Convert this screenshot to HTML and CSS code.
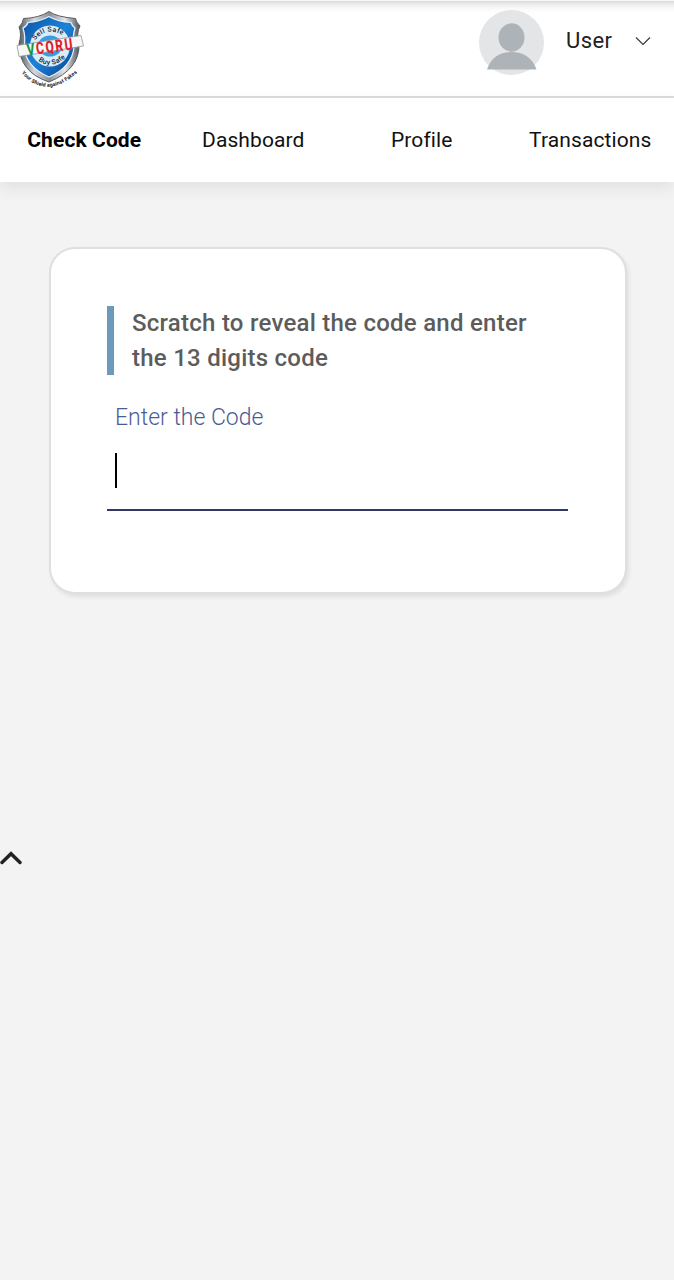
FILE: index.html
```html
<!DOCTYPE html>
<html lang="en">
<head>
<meta charset="utf-8">
<meta name="viewport" content="width=device-width, initial-scale=1">
<title>VCQRU - Check Code</title>
<link rel="stylesheet" href="styles.css">
</head>
<body>
<header class="topbar">
  <svg class="logo" viewBox="0 0 100 100" role="img" aria-label="VCQRU">
    <defs>
      <linearGradient id="steel" x1="0" y1="0" x2="1" y2="0">
        <stop offset="0" stop-color="#555b63"/><stop offset=".25" stop-color="#d5d8dc"/><stop offset=".5" stop-color="#8b9096"/><stop offset=".75" stop-color="#e5e7e9"/><stop offset="1" stop-color="#4b5057"/>
      </linearGradient>
      <linearGradient id="blue" x1="0" y1="0" x2="1" y2="1">
        <stop offset="0" stop-color="#0a55a5"/><stop offset=".5" stop-color="#1c83d8"/><stop offset="1" stop-color="#063f92"/>
      </linearGradient>
      <path id="arc-top" d="M35 40.500Q47 25.500 64 36"/>
      <path id="arc-bottom" d="M37.500 60Q51 71 67 56.500"/>
      <path id="arc-tag" d="M21.500 73Q46 101 78 72"/>
    </defs>
    <path d="M49 11.500Q57 17 75.500 18.500Q76 22 80 26Q76 33 79 44Q80 69 49 82Q19 72 19 44Q22 34 19 27Q23 23 23.500 18.500Q39 18 49 11.500Z" fill="url(#steel)" stroke="#555b62" stroke-width="1"/>
    <path d="M49 16.500Q58 22 71 22.500Q72 26 75 28Q72 38 74 47Q72 67 49 77Q26 67 24 47Q26 37 23 28Q27 26 28 22.500Q39 22 49 16.500Z" fill="url(#blue)" stroke="#e7f3fb" stroke-width="1.200"/>
    <ellipse cx="50" cy="46" rx="20" ry="20.500" fill="#d9edf8"/>
    <ellipse cx="50" cy="46" rx="12" ry="10.500" fill="#3d9ae0"/>
    <text class="logo-ring"><textPath href="#arc-top" textLength="31">Sell Safe</textPath></text>
    <text class="logo-ring"><textPath href="#arc-bottom" startOffset="1" textLength="30">Buy Safe</textPath></text>
    <path d="M17 45.500L81 35.500L83.500 46L19 56.500Z" fill="#f7f7f7" stroke="#92979c" stroke-width=".8"/>
    <text class="logo-name" transform="translate(27.500 55.500) rotate(-7.500) scale(.73 1)" textLength="63"><tspan fill="#149447">V</tspan><tspan fill="#df202b">CQRU</tspan></text>
    <text class="logo-tag"><textPath href="#arc-tag" textLength="64">Your Shield against Fakes</textPath></text>
  </svg>
  <div class="account">
    <svg class="avatar" viewBox="0 0 65 65" aria-hidden="true">
      <circle cx="32.500" cy="32.500" r="32.500" fill="#e3e5e7"/>
      <ellipse cx="32.500" cy="27.500" rx="13" ry="14.200" fill="#adb3b7"/>
      <path d="M8 59.500C12 47.500 21 42 32.500 42S53.500 47.500 57.500 59.500Z" fill="#adb3b7"/>
    </svg>
    <span class="user-name">User</span>
    <svg class="chevron" viewBox="0 0 16 10" aria-hidden="true"><path d="M1 1.500L8 8.500L15 1.500"/></svg>
  </div>
</header>
<nav class="tabs">
  <a class="tab tab-active">Check Code</a>
  <a class="tab">Dashboard</a>
  <a class="tab">Profile</a>
  <a class="tab">Transactions</a>
</nav>
<main class="content">
  <section class="card">
    <h1 class="card-title">Scratch to reveal the code and enter the 13 digits code</h1>
    <div class="field">
      <div class="field-label">Enter the Code</div>
      <div class="caret"></div>
    </div>
  </section>
  <svg class="to-top" viewBox="0 0 22 14" aria-hidden="true"><path d="M2 11.500L11 2.700L20 11.500"/></svg>
</main>
</body>
</html>
```
FILE: styles.css
```css
* { box-sizing: border-box; }
body {
  margin: 0;
  min-height: 1280px;
  background: #f3f3f3;
  font-family: Roboto, "Liberation Sans", sans-serif;
  color: #111;
}
.topbar {
  height: 98px;
  display: flex;
  justify-content: space-between;
  align-items: flex-start;
  background: linear-gradient(#f8f8f8 0, #f8f8f8 1px, #d9d9d9 1px, #ececec 4px, #fafafa 9px, #fff 13px);
  border-bottom: 2px solid #dcdcdc;
}
.logo { width: 100px; height: 100px; margin-bottom: -4px; overflow: visible; flex: none; }
.logo-ring { font: 500 7px Roboto, sans-serif; fill: #17242e; }
.logo-name { font: 800 16.500px Roboto, sans-serif; }
.logo-tag { font: 700 5.200px Roboto, sans-serif; fill: #111; }
.account { display: flex; align-items: center; padding: 9.500px 23px 0 0; }
.avatar { width: 65px; height: 65px; }
.user-name {
  width: 47px;
  margin: -2px 22px 0;
  font-size: 22px;
  line-height: 26px;
  letter-spacing: .4px;
  color: #222;
  white-space: nowrap;
}
.chevron { width: 16px; height: 10px; margin-top: -2px; }
.chevron path { fill: none; stroke: #333; stroke-width: 1.100; }
.tabs {
  position: relative;
  height: 84px;
  display: grid;
  grid-template-columns: repeat(4, 1fr);
  align-items: center;
  background: #fff;
  box-shadow: 0 6px 16px rgba(0, 0, 0, .08);
}
.tab { padding-left: 1px; font-size: 21px; line-height: 26px; text-align: center; letter-spacing: .1px; }
.tab-active { padding-left: 0; font-weight: 700; color: #000; }
.content { padding: 65px 47px 0 49px; }
.card {
  height: 347px;
  padding: 57px 57px 0 56px;
  background: #fff;
  border: 2px solid #dfdfdf;
  border-radius: 26px;
  box-shadow: 2px 3px 4px rgba(0, 0, 0, .08);
}
.card-title {
  margin: 0;
  height: 69px;
  padding: 0 30px 0 18px;
  border-left: 7px solid #6c9aba;
  font-size: 24px;
  line-height: 34.500px;
  letter-spacing: .25px;
  font-weight: 500;
  color: #5c5c5c;
}
.field {
  height: 136px;
  padding: 29px 8px 0;
  border-bottom: 2px solid #303866;
}
.field-label { font-size: 23px; line-height: 28px; font-weight: 300; color: #4b5c94; }
.caret { width: 2px; height: 35px; margin-top: 21px; background: #000; }
.to-top { display: block; width: 22px; height: 14px; margin: 257px 0 0 -49px; }
.to-top path { fill: none; stroke: #222; stroke-width: 3.400; stroke-linecap: round; }
```
